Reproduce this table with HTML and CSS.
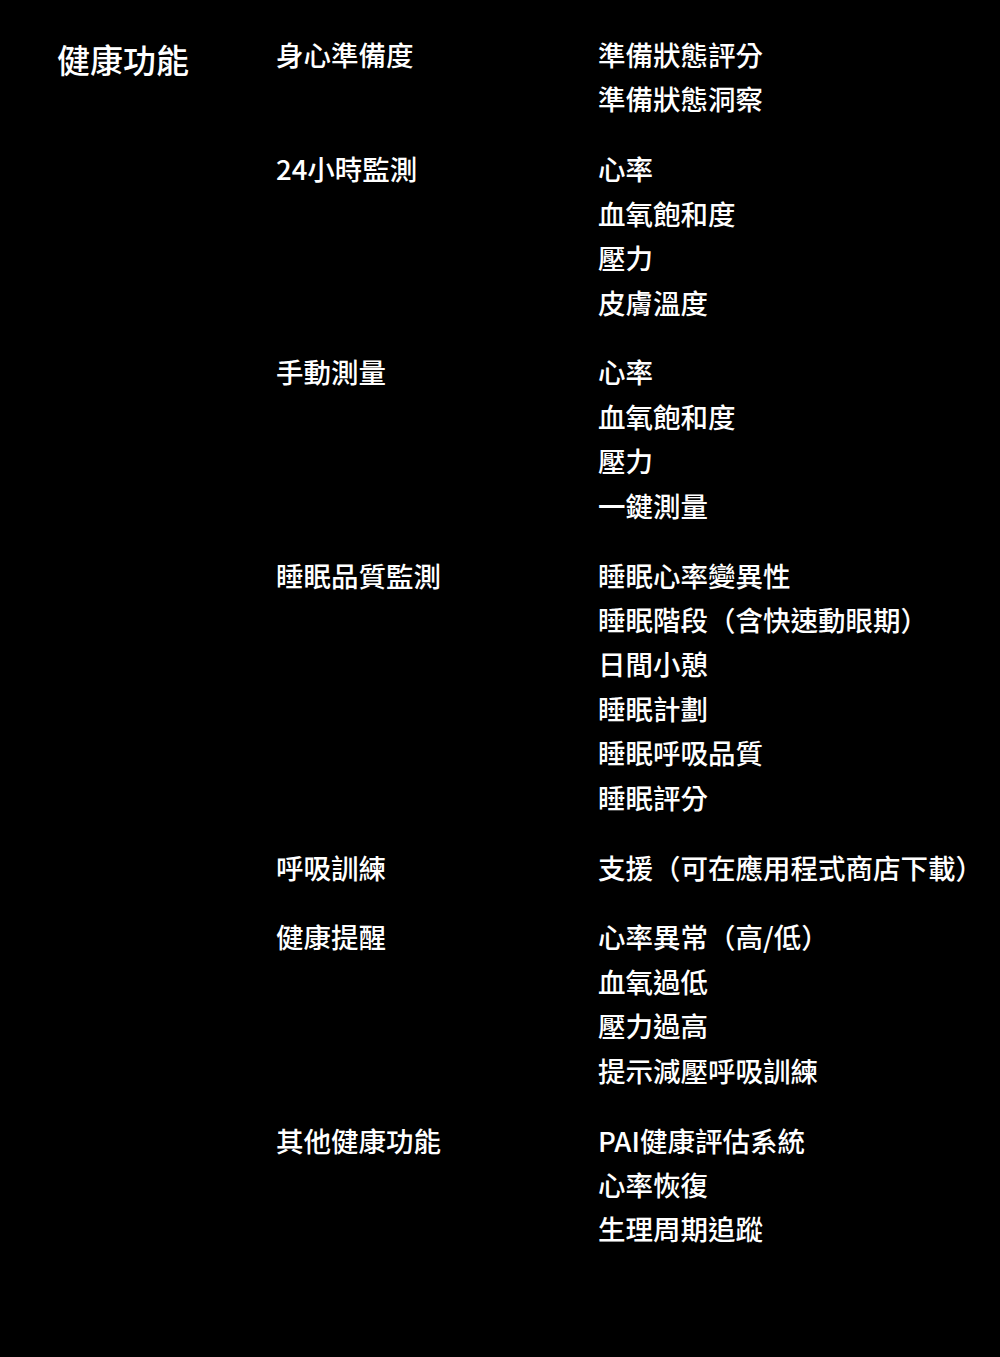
FILE: index.html
```html
<!DOCTYPE html>
<html lang="zh-Hant">
<head>
<meta charset="utf-8">
<link rel="stylesheet" href="styles.css">
</head>
<body>
<div class="page">
  <h1 class="title">健康功能</h1>
  <div class="groups">
    <div class="group">
      <div class="cat">身心準備度</div>
      <ul class="items"><li>準備狀態評分</li><li>準備狀態洞察</li></ul>
    </div>
    <div class="group">
      <div class="cat">24小時監測</div>
      <ul class="items"><li>心率</li><li>血氧飽和度</li><li>壓力</li><li>皮膚溫度</li></ul>
    </div>
    <div class="group">
      <div class="cat">手動測量</div>
      <ul class="items"><li>心率</li><li>血氧飽和度</li><li>壓力</li><li>一鍵測量</li></ul>
    </div>
    <div class="group">
      <div class="cat">睡眠品質監測</div>
      <ul class="items"><li>睡眠心率變異性</li><li>睡眠階段（含快速動眼期）</li><li>日間小憩</li><li>睡眠計劃</li><li>睡眠呼吸品質</li><li>睡眠評分</li></ul>
    </div>
    <div class="group">
      <div class="cat">呼吸訓練</div>
      <ul class="items"><li>支援（可在應用程式商店下載）</li></ul>
    </div>
    <div class="group">
      <div class="cat">健康提醒</div>
      <ul class="items"><li>心率異常（高/低）</li><li>血氧過低</li><li>壓力過高</li><li>提示減壓呼吸訓練</li></ul>
    </div>
    <div class="group">
      <div class="cat">其他健康功能</div>
      <ul class="items"><li>PAI健康評估系統</li><li>心率恢復</li><li>生理周期追蹤</li></ul>
    </div>
  </div>
</div>
</body>
</html>
```
FILE: styles.css
```css
html, body {
  margin: 0;
  padding: 0;
  background: #000;
}
body {
  color: #fff;
  font-family: "Noto Sans CJK TC", "Noto Sans CJK SC", sans-serif;
  font-weight: 500;
  width: 1000px;
  height: 1357px;
  overflow: hidden;
}
.page {
  display: flex;
  padding: 32px 0 0 57px;
}
.title {
  width: 219px;
  flex: none;
  margin: 0;
  font-size: 33px;
  font-weight: 500;
  line-height: 54px;
}
.groups {
  display: flex;
  flex-direction: column;
  gap: 25.5px;
}
.group {
  display: flex;
}
.cat {
  width: 322px;
  flex: none;
  font-size: 27.5px;
  line-height: 44.4px;
}
.items {
  list-style: none;
  margin: 0;
  padding: 0;
  font-size: 27.5px;
  line-height: 44.4px;
}
.items li {
  white-space: nowrap;
}
```
